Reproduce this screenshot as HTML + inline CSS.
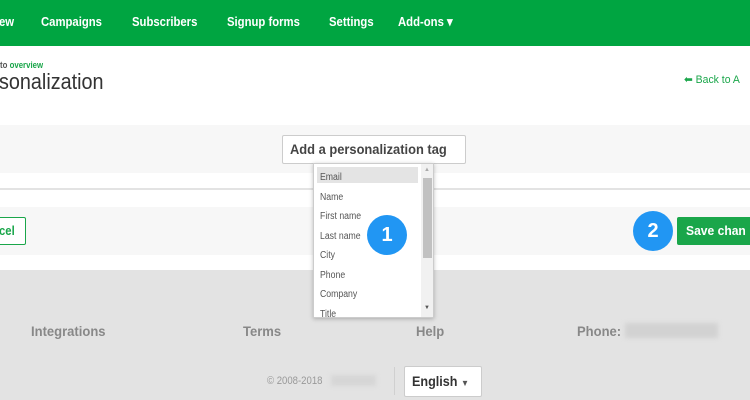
<!DOCTYPE html>
<html><head><style>
*{margin:0;padding:0;box-sizing:border-box}
body{width:750px;height:400px;overflow:hidden;position:relative;font-family:"Liberation Sans",Arial,sans-serif;background:#fff}
.a{position:absolute}
.c{transform:scaleX(.87);transform-origin:0 0;white-space:nowrap}
.f{transform:scaleX(.93);transform-origin:0 0;white-space:nowrap;font-size:14px;font-weight:bold;color:#888;top:323px}
.nav{left:0;top:0;width:750px;height:46px;background:#00a541}
.nav span{position:absolute;top:14px;color:#fff;font-weight:bold;font-size:13px}
</style></head><body>
<div class="a nav">
<span class="c" style="left:-1px">ew</span><span class="c" style="left:41px">Campaigns</span><span class="c" style="left:132px">Subscribers</span><span class="c" style="left:227px">Signup forms</span><span class="c" style="left:329px">Settings</span><span class="c" style="left:398px">Add-ons ▾</span>
</div>
<div class="a c" style="left:0;top:60px;font-size:9px;color:#555;font-weight:bold">to <span style="color:#1aa64a">overview</span></div>
<div class="a c" style="left:-1px;top:69px;font-size:22px;color:#333;transform:scaleX(.9)">sonalization</div>
<div class="a c" style="left:684px;top:73px;font-size:11px;color:#1aa64a;transform:scaleX(.95)">⬅ Back to A</div>
<div class="a" style="left:0;top:125px;width:750px;height:48px;background:#f7f7f7"></div>
<div class="a" style="left:282px;top:135px;width:184px;height:29px;background:#fff;border:1px solid #ccc;border-radius:2px;font-size:14px;font-weight:bold;color:#444;line-height:27px;padding-left:7px"><span class="c" style="display:inline-block;transform:scaleX(.92)">Add a personalization tag</span></div>
<div class="a" style="left:0;top:188px;width:750px;height:2px;background:#e3e3e3"></div>
<div class="a" style="left:0;top:207px;width:750px;height:48px;background:#f7f7f7"></div>
<div class="a" style="left:-10px;top:217px;width:36px;height:28px;border:1px solid #1aa64a;background:#fff;border-radius:2px;color:#1aa64a;font-weight:bold;font-size:13px;line-height:26px;padding-left:8px"><span class="c" style="display:inline-block">cel</span></div>
<div class="a" style="left:677px;top:217px;width:80px;height:28px;background:#1aa64a;border-radius:2px;color:#fff;font-weight:bold;font-size:13px;line-height:28px;padding-left:9px"><span class="c" style="display:inline-block;transform:scaleX(.93)">Save chan</span></div>
<div class="a" style="left:0;top:270px;width:750px;height:130px;background:#e3e3e3"></div>
<div class="a f" style="left:31px">Integrations</div>
<div class="a f" style="left:243px">Terms</div>
<div class="a f" style="left:416px">Help</div>
<div class="a f" style="left:577px">Phone:</div>
<div class="a" style="left:625px;top:323px;width:93px;height:15px;background:#d2d2d2;filter:blur(2px)"></div>
<div class="a c" style="left:267px;top:375px;font-size:11px;color:#999">© 2008-2018</div>
<div class="a" style="left:331px;top:375px;width:45px;height:11px;background:#d6d6d6;filter:blur(2px)"></div>
<div class="a" style="left:394px;top:367px;width:1px;height:28px;background:#d0d0d0"></div>
<div class="a" style="left:404px;top:366px;width:78px;height:31px;background:#fff;border:1px solid #ccc;border-radius:2px;font-size:14px;font-weight:bold;color:#333;line-height:29px;padding-left:7px"><span class="c" style="display:inline-block;transform:scaleX(.9)">English <span style="font-size:9px;color:#555">▼</span></span></div>
<div class="a" style="left:313px;top:163px;width:121px;height:155px;background:#fff;border:1px solid #ccc;box-shadow:0 1px 4px rgba(0,0,0,.25);overflow:hidden;font-size:10px;color:#555">
<div class="a" style="left:3px;top:3px;width:101px;height:16px;background:#e4e4e4"></div>
<div class="a c" style="left:6px;top:4px;line-height:19.5px">Email<br>Name<br>First name<br>Last name<br>City<br>Phone<br>Company<br>Title</div>
<div class="a" style="left:107px;top:0;width:13px;height:153px;background:#f1f1f1"></div>
<div class="a" style="left:109px;top:14px;width:9px;height:80px;background:#c1c1c1"></div>
<div class="a" style="left:110px;top:3px;font-size:6px;color:#aaa">▲</div>
<div class="a" style="left:110px;top:141px;font-size:6px;color:#555">▼</div>
</div>
<div class="a" style="left:367px;top:215px;width:40px;height:40px;border-radius:50%;background:#2196f3;color:#fff;font-weight:bold;font-size:20px;text-align:center;line-height:40px">1</div>
<div class="a" style="left:633px;top:211px;width:40px;height:40px;border-radius:50%;background:#2196f3;color:#fff;font-weight:bold;font-size:20px;text-align:center;line-height:40px">2</div>
</body></html>
